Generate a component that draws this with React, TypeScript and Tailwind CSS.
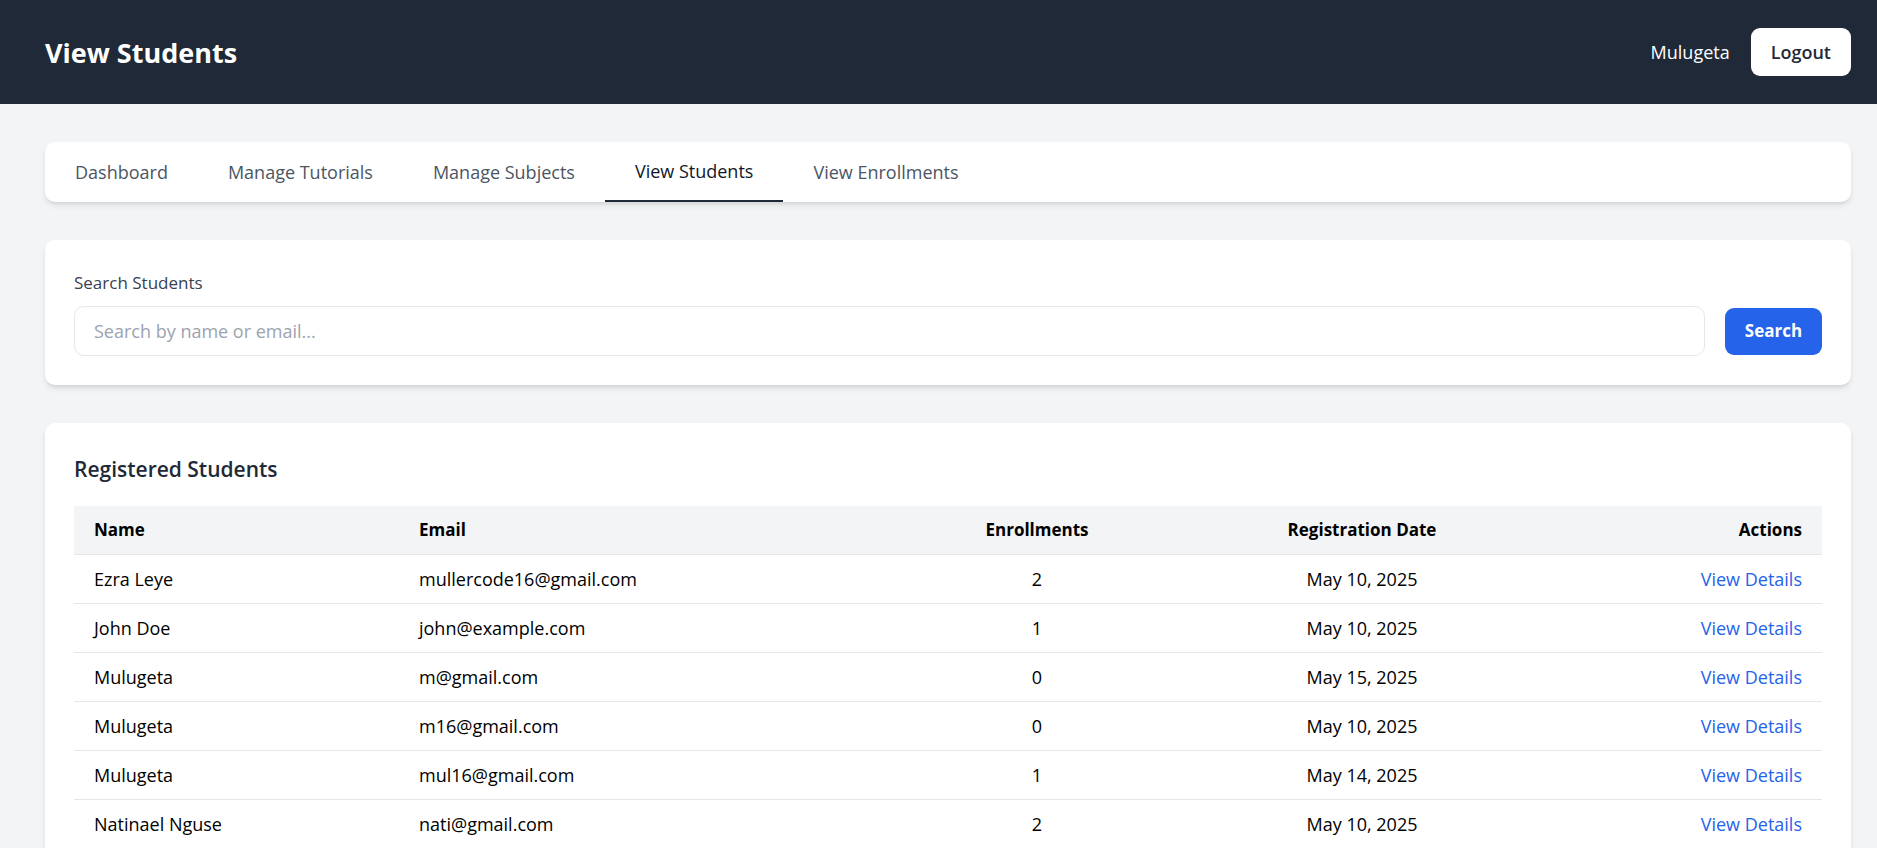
import React from "react";

const tabs = ["Dashboard", "Manage Tutorials", "Manage Subjects", "View Students", "View Enrollments"];

const students = [
  { name: "Ezra Leye", email: "mullercode16@gmail.com", enrollments: 2, date: "May 10, 2025" },
  { name: "John Doe", email: "john@example.com", enrollments: 1, date: "May 10, 2025" },
  { name: "Mulugeta", email: "m@gmail.com", enrollments: 0, date: "May 15, 2025" },
  { name: "Mulugeta", email: "m16@gmail.com", enrollments: 0, date: "May 10, 2025" },
  { name: "Mulugeta", email: "mul16@gmail.com", enrollments: 1, date: "May 14, 2025" },
  { name: "Natinael Nguse", email: "nati@gmail.com", enrollments: 2, date: "May 10, 2025" },
];

const cols = "grid grid-cols-[325px_495px_286px_364px_1fr]";

export default function App() {
  return (
    <div
      className="min-h-screen bg-[#f3f4f6]"
      style={{ fontFamily: '"Open Sans", "Noto Sans", sans-serif' }}
    >
      {/* Top bar */}
      <header className="h-[104px] bg-[#1f2937] flex items-center justify-between pl-[45px] pr-[26px]">
        <h1 className="text-[27px] font-bold text-white pt-[2px]">View Students</h1>
        <div className="flex items-center gap-[21px]">
          <span className="text-[18px] text-white">Mulugeta</span>
          <button className="h-[48px] px-[20px] rounded-[9px] bg-white text-[18px] font-semibold text-[#1f2937]">
            Logout
          </button>
        </div>
      </header>

      <main className="pl-[45px] pr-[26px] pt-[38px] pb-10 flex flex-col gap-[38px]">
        {/* Tabs */}
        <nav className="h-[60px] bg-white rounded-[10px] shadow-md flex overflow-hidden">
          {tabs.map((tab) => (
            <div
              key={tab}
              className={
                tab === "View Students"
                  ? "h-full flex items-center px-[30px] text-[18px] text-[#111827] border-b-2 border-[#1f2937]"
                  : "h-full flex items-center px-[30px] text-[18px] text-[#4b5563]"
              }
            >
              {tab}
            </div>
          ))}
        </nav>

        {/* Search */}
        <section className="bg-white rounded-[10px] shadow-md px-[29px] pt-[30px] pb-[29px]">
          <label className="block text-[17px] font-medium text-[#374151] mb-[10px] leading-[26px]">
            Search Students
          </label>
          <div className="flex items-center gap-[20px]">
            <input
              placeholder="Search by name or email..."
              className="flex-1 h-[50px] border border-[#e5e7eb] rounded-[10px] px-[19px] text-[18px] placeholder:text-[#9ca3af] outline-none"
            />
            <button className="h-[47px] w-[97px] rounded-[9px] bg-[#2563eb] text-white text-[17px] font-bold">
              Search
            </button>
          </div>
        </section>

        {/* Students table */}
        <section className="bg-white rounded-[10px] shadow-md p-[29px]">
          <h2 className="text-[21px] font-semibold text-[#1f2937] leading-[32px] mb-[21px] pt-[1px]">
            Registered Students
          </h2>
          <div className="text-black">
            <div className={`${cols} h-[49px] items-center bg-[#f3f4f6] border-b border-[#e5e7eb] text-[17px] font-bold`}>
              <div className="px-[20px]">Name</div>
              <div className="px-[20px]">Email</div>
              <div className="text-center">Enrollments</div>
              <div className="text-center">Registration Date</div>
              <div className="text-right px-[20px]">Actions</div>
            </div>
            {students.map((s, i) => (
              <div key={i} className={`${cols} h-[49px] items-center border-b border-[#e5e7eb] text-[18px]`}>
                <div className="px-[20px]">{s.name}</div>
                <div className="px-[20px]">{s.email}</div>
                <div className="text-center">{s.enrollments}</div>
                <div className="text-center">{s.date}</div>
                <div className="text-right px-[20px]">
                  <a href="#" className="text-[#2563eb]">View Details</a>
                </div>
              </div>
            ))}
          </div>
        </section>
      </main>
    </div>
  );
}
